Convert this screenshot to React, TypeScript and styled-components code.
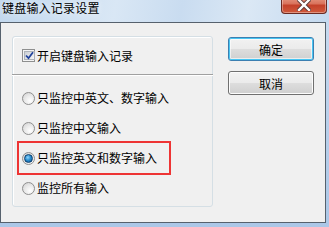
import React, { useState } from "react";
import styled, { createGlobalStyle } from "styled-components";

const GlobalStyle = createGlobalStyle`
  html, body {
    margin: 0;
    padding: 0;
    background: #b3cce8;
  }
  * { box-sizing: border-box; }
`;

const FONT = `"Noto Sans CJK SC", "Microsoft YaHei", "Liberation Sans", sans-serif`;

const Window = styled.div`
  width: 329px;
  height: 227px;
  display: flex;
  flex-direction: column;
  overflow: hidden;
  background: linear-gradient(180deg, #c9dcf0 0%, #bcd3ec 40%, #abc7e7 100%);
  font-family: ${FONT};
  color: #000;
`;

const TitleBar = styled.div`
  height: 22px;
  flex: none;
  display: flex;
  justify-content: space-between;
  align-items: flex-start;
  background: linear-gradient(100deg, #c2d8ee 0%, #d9e7f5 35%, #c9dcf0 55%, #dbe8f5 75%, #c4d9ef 100%);
`;

const Title = styled.div`
  font-size: 12px;
  line-height: 16px;
  padding-left: 2px;
  letter-spacing: 0.2px;
  text-shadow: 0 0 6px rgba(255, 255, 255, 0.9);
`;

const CloseButton = styled.div`
  width: 46px;
  height: 18px;
  margin-top: -4px;
  margin-right: 2px;
  border: 1px solid #6a2a22;
  border-top: none;
  border-radius: 0 0 4px 4px;
  background: linear-gradient(180deg, #e8a08c 0%, #d9735c 45%, #c4412a 55%, #cf5a3c 100%);
  box-shadow: inset 0 0 0 1px rgba(255, 255, 255, 0.35);
  display: flex;
  align-items: center;
  justify-content: center;
`;

const Client = styled.div`
  flex: 1;
  margin: 0 3px 4px 0;
  border: 1px solid #56616d;
  background: #f0f0f0;
  display: flex;
  align-items: flex-start;
  padding: 13px 0 0 11px;
`;

const GroupBox = styled.div`
  width: 201px;
  height: 171px;
  border: 1px solid #d5dfe5;
  border-radius: 3px;
  box-shadow: inset 1px 1px 0 #fff;
  display: flex;
  flex-direction: column;
`;

const TopSection = styled.div`
  height: 37px;
  display: flex;
  align-items: center;
  padding-left: 9px;
`;

const Divider = styled.div`
  height: 1px;
  margin: 0 -1px;
  background: #a0a0a0;
  box-shadow: 0 1px 0 #fff;
`;

const OptionList = styled.div`
  display: flex;
  flex-direction: column;
  padding-top: 8px;
`;

const Row = styled.label<{ $highlight?: boolean }>`
  position: relative;
  height: 30px;
  display: flex;
  align-items: center;
  padding-left: 9px;
  font-size: 12px;
  cursor: default;

  ${(p) =>
    p.$highlight &&
    `
    &::after {
      content: "";
      position: absolute;
      left: 4px;
      top: -2px;
      width: 150px;
      height: 30px;
      border: 2px solid #ee3434;
      pointer-events: none;
    }
  `}
`;

const Label = styled.span`
  margin-left: 2px;
  font-size: 12px;
  line-height: 16px;
  white-space: nowrap;
`;

const CheckBox = styled.span`
  width: 13px;
  height: 13px;
  flex: none;
  border: 1px solid #8e8f8f;
  background: #f4f4f4;
  padding: 1px;
  display: flex;

  span {
    flex: 1;
    border: 1px solid #aeb3b9;
    background: linear-gradient(135deg, #cbcfd5 0%, #f6f6f6 100%);
    display: flex;
    align-items: center;
    justify-content: center;
  }
`;

const Radio = styled.span<{ $checked?: boolean }>`
  width: 13px;
  height: 13px;
  flex: none;
  border-radius: 50%;
  border: 1px solid #8f8f8f;
  background: radial-gradient(circle at 65% 70%, #ffffff 0%, #e9e9e9 50%, #cfcfcf 100%);
  display: flex;
  align-items: center;
  justify-content: center;

  &::after {
    content: "";
    display: ${(p) => (p.$checked ? "block" : "none")};
    width: 7px;
    height: 7px;
    border-radius: 50%;
    border: 1px solid #0c3f6e;
    background: radial-gradient(circle at 40% 35%, #8fd6ff 0%, #2a8fd0 45%, #0d4f8c 100%);
  }
`;

const ButtonColumn = styled.div`
  display: flex;
  flex-direction: column;
  gap: 10px;
  margin-left: 15px;
  padding-top: 1px;
`;

const Button = styled.button<{ $default?: boolean }>`
  width: 86px;
  height: 24px;
  padding: 0;
  font-family: ${FONT};
  font-size: 12px;
  color: #000;
  border-radius: 3px;
  border: 1px solid ${(p) => (p.$default ? "#3c7fb1" : "#707070")};
  background: linear-gradient(180deg, #f2f2f2 0%, #ebebeb 48%, #dddddd 52%, #cfcfcf 100%);
  box-shadow: ${(p) =>
    p.$default
      ? "inset 0 0 0 1px #48c5f2, inset 0 0 0 2px rgba(255,255,255,0.6)"
      : "inset 0 0 0 1px #fcfcfc"};
  cursor: default;
`;

const CloseIcon = () => (
  <svg width="14" height="12" viewBox="0 0 14 12">
    <path
      d="M2 1 L12 11 M12 1 L2 11"
      stroke="#5a3a38"
      strokeWidth="4.2"
      strokeLinecap="square"
    />
    <path
      d="M2 1 L12 11 M12 1 L2 11"
      stroke="#ffffff"
      strokeWidth="2.4"
      strokeLinecap="square"
    />
  </svg>
);

const CheckMark = () => (
  <svg width="9" height="9" viewBox="0 0 9 9">
    <path d="M1 4.5 L3.5 7.2 L8 1.2" fill="none" stroke="#21439c" strokeWidth="1.8" />
  </svg>
);

const options = [
  "只监控中英文、数字输入",
  "只监控中文输入",
  "只监控英文和数字输入",
  "监控所有输入",
];

export default function App() {
  const [selected] = useState(2);

  return (
    <>
      <GlobalStyle />
      <Window>
        <TitleBar>
          <Title>键盘输入记录设置</Title>
          <CloseButton>
            <CloseIcon />
          </CloseButton>
        </TitleBar>

        <Client>
          <GroupBox>
            <TopSection>
              <CheckBox>
                <span>
                  <CheckMark />
                </span>
              </CheckBox>
              <Label>开启键盘输入记录</Label>
            </TopSection>
            <Divider />
            <OptionList>
              {options.map((text, i) => (
                <Row key={text} $highlight={i === 2}>
                  <Radio $checked={i === selected} />
                  <Label>{text}</Label>
                </Row>
              ))}
            </OptionList>
          </GroupBox>

          <ButtonColumn>
            <Button $default>确定</Button>
            <Button>取消</Button>
          </ButtonColumn>
        </Client>
      </Window>
    </>
  );
}
